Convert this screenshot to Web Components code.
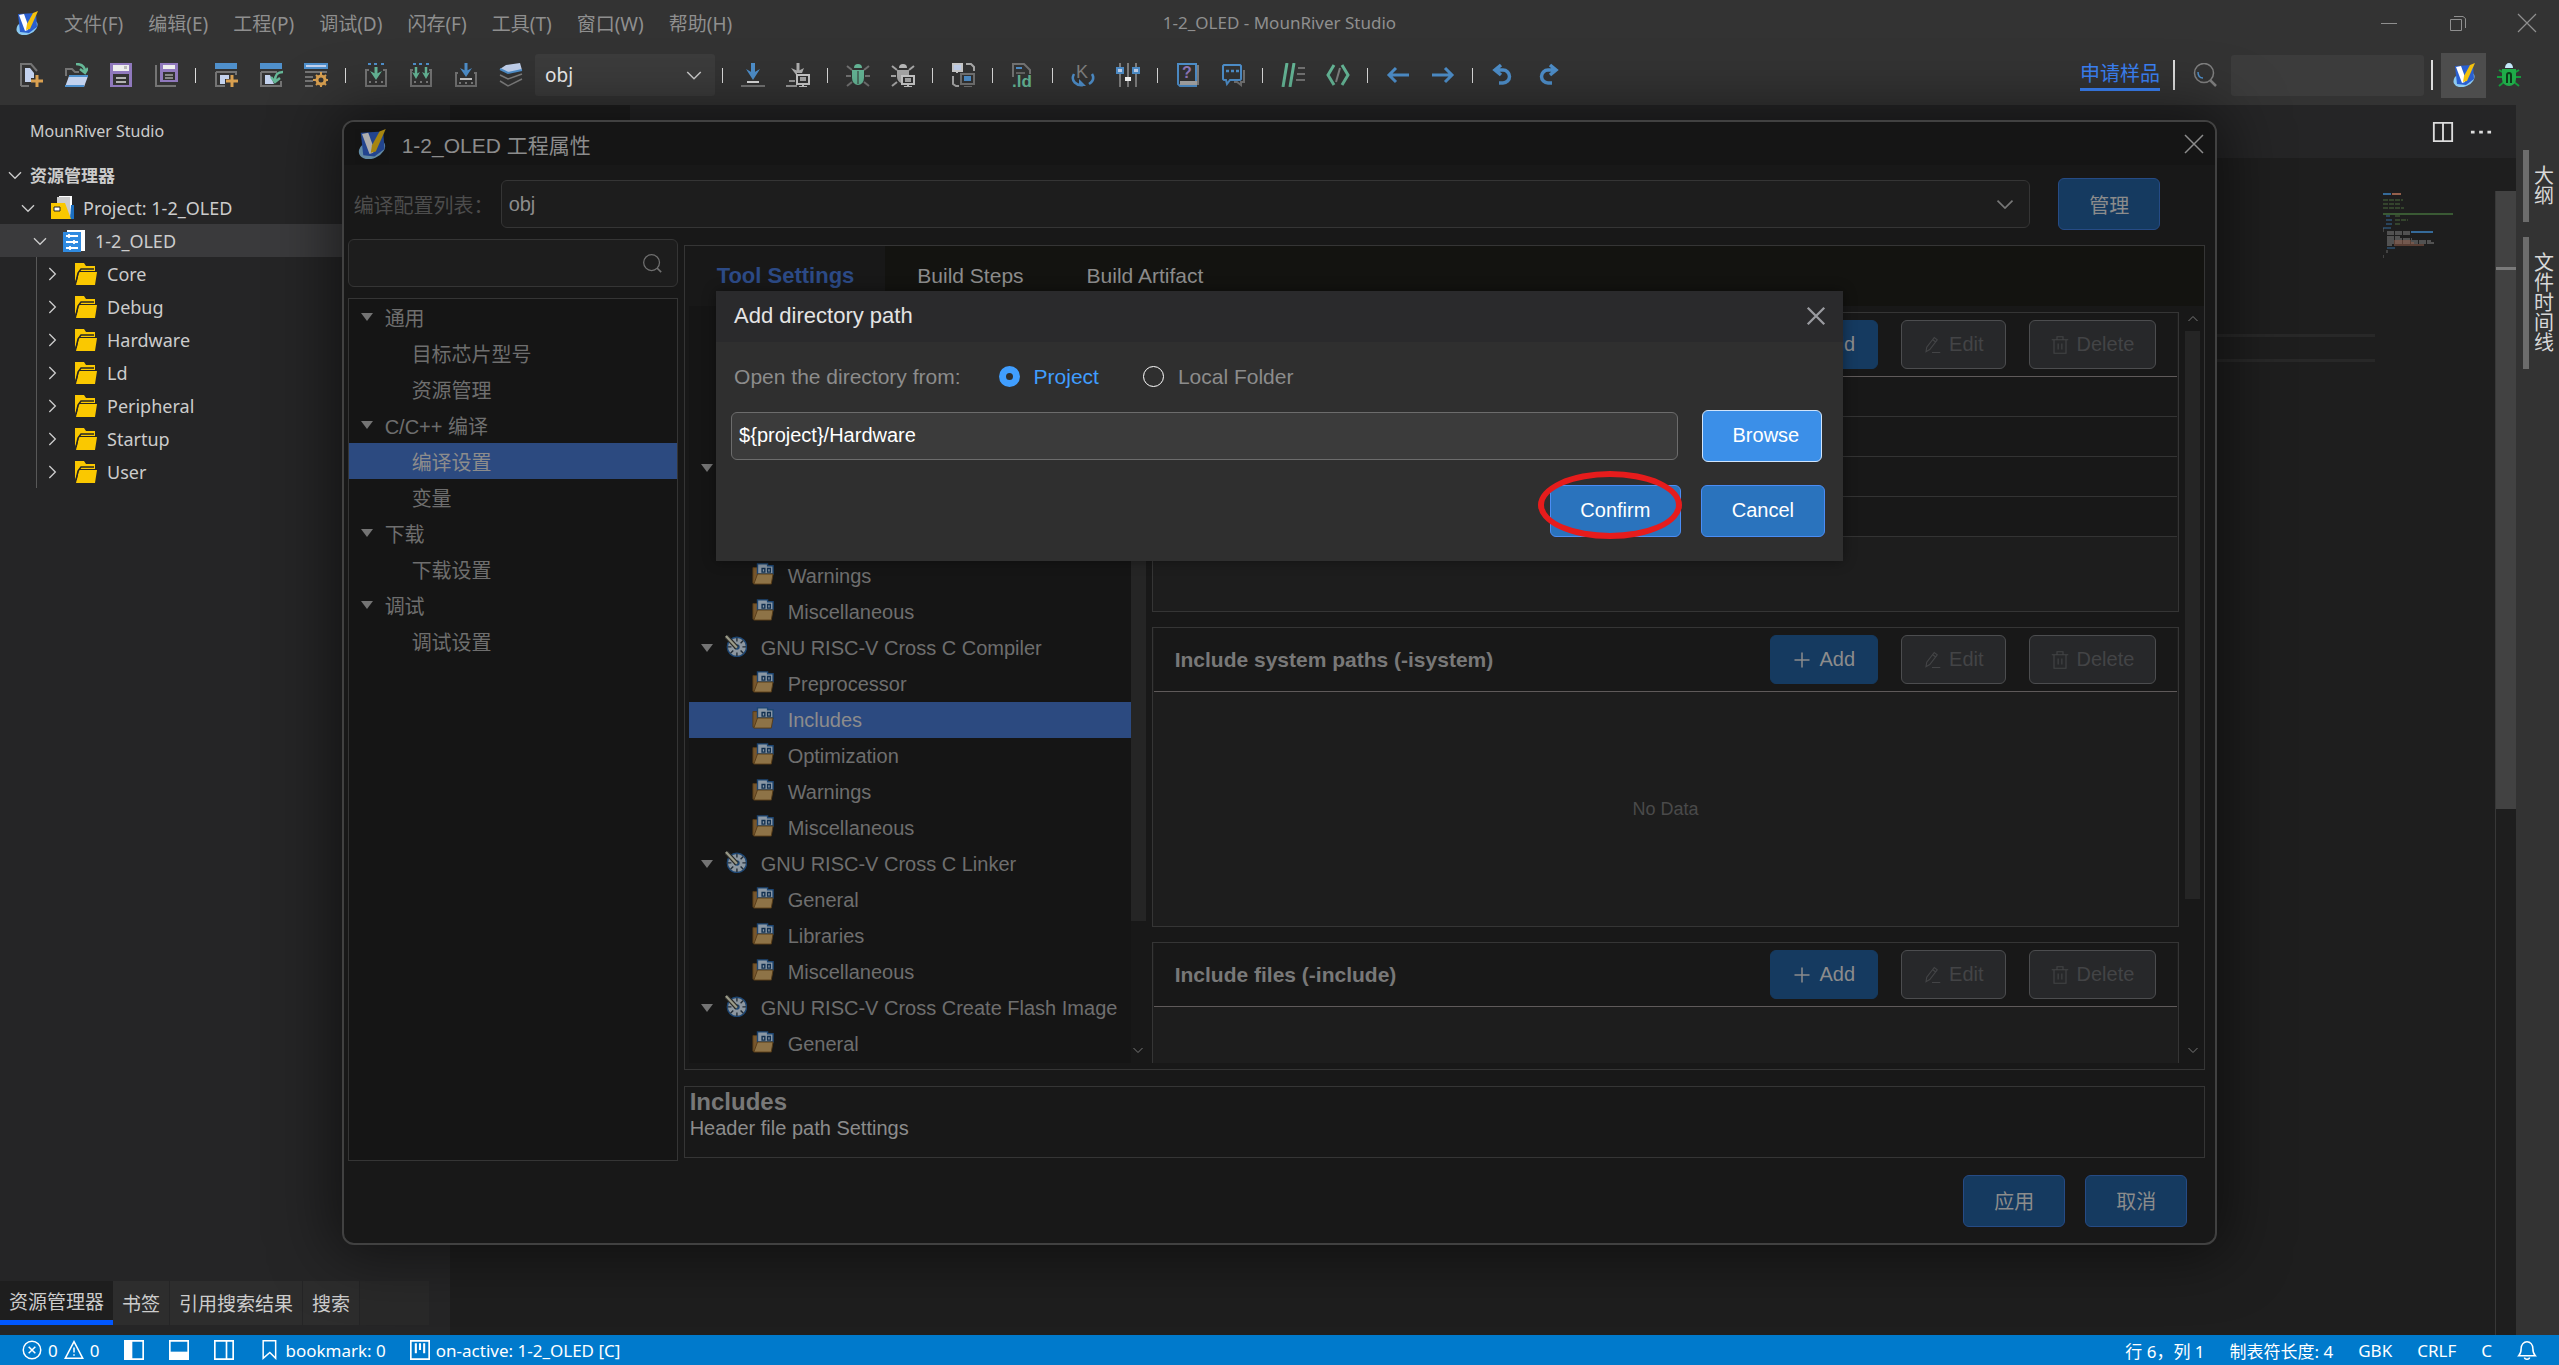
<!DOCTYPE html>
<html lang="zh-CN">
<head>
<meta charset="utf-8">
<title>1-2_OLED - MounRiver Studio</title>
<style>
  html, body { height: 100%; margin: 0; }
  body {
    background: #1e1e1e;
    color: #ccc;
    overflow: hidden;
    font-family: "Noto Sans", "Noto Sans CJK SC", sans-serif;
    font-size: 18px;
  }
</style>
</head>
<body>
<mr-app></mr-app>

<script>
// every icon is drawn in a 24 x 24 box
const ICONS = {
  logo: `<ellipse cx="12" cy="16" rx="11" ry="7.5" fill="#8ccaf0" transform="rotate(-24 12 16)"/>
    <path d="M3 3l18-1 1 14-8 6-9-1z" fill="#2a5fd0"/><path d="M4 4l5-1 4 11 0 5-3 1z" fill="#fff"/>
    <path d="M11 19l1-6 6-11 5-2-8 18z" fill="#f4c20d"/>`,
  newfile: `<path d="M2 23V1h10l6 7M2 23h8" fill="none" stroke="#747474" stroke-width="2"/><path d="M6 5h5l4 5v5h-3v4H6z" fill="#c3d2ee"/>
    <path d="M18 12v12M12 18h12" stroke="#d9a050" stroke-width="3"/>`,
  open: `<path d="M2 13V6h6l3 3h4" fill="none" stroke="#747474" stroke-width="2"/><path d="M5 13h19l-4 11H1z" fill="#c3d2ee"/>
    <path d="M5 13h19M1 23h19" stroke="#4f90cc" stroke-width="2"/><path d="M12 1c5 0 9 2 9 8M16 6l5 4 3-5" fill="none" stroke="#66b898" stroke-width="2.5"/>`,
  save: `<path d="M1 0h22v24H1z" fill="#9079bd"/><path d="M4 2h16v6H4z" fill="#eee"/><path d="M15 3h3v3h-3z" fill="#bbb"/><path d="M4 11h16v11H4z" fill="#333"/><path d="M7 15h10M7 19h10" stroke="#ddd" stroke-width="1.5"/>`,
  saveall: `<path d="M2 2v21h20" fill="none" stroke="#747474" stroke-width="2"/><path d="M6 0h18v19H6z" fill="#9079bd"/><path d="M9 2h12v4H9z" fill="#eee"/><path d="M9 9h12v8H9z" fill="#333"/><path d="M11 12h8M11 15h8" stroke="#ddd"/>`,
  newproj: `<path d="M1 0h22v6H1z" fill="#4f90cc"/><path d="M2 9v14h9M2 9h20v3" fill="none" stroke="#747474" stroke-width="2"/><path d="M6 12h9v4h-4v5H6z" fill="#c3d2ee"/><path d="M18 12v12M12 18h12" stroke="#d9a050" stroke-width="3"/>`,
  importproj: `<path d="M1 0h22v6H1z" fill="#4f90cc"/><path d="M2 9v14h20v-5M2 9h16" fill="none" stroke="#747474" stroke-width="2"/><path d="M6 12h5l4 9H6z" fill="#c3d2ee"/><path d="M24 9c-6 0-8 3-8 9M12 14l4 5 5-4" fill="none" stroke="#66b898" stroke-width="2.5"/>`,
  projset: `<path d="M1 1h22v4H1z" fill="#c3d2ee" stroke="#4f90cc" stroke-width="2"/><path d="M1 9h22M1 14h8M1 18h8M1 23h8" stroke="#747474" stroke-width="2"/><circle cx="17" cy="17" r="4" fill="none" stroke="#d9a050" stroke-width="3"/><path d="M17 9v4M17 21v3M9 17h4M21 17h3M12 12l2 2M22 12l-2 2M12 22l2-2M22 22l-2-2" stroke="#d9a050" stroke-width="2"/>`,
  build: `<path d="M4 1h3M10 1h3M17 1h3" stroke="#4f90cc" stroke-width="2"/><path d="M5 7H2v16h20V7h-3" fill="none" stroke="#747474" stroke-width="2"/><path d="M12 4v9" stroke="#66b898" stroke-width="3"/><path d="M6 8l6 3 6-3-6 9z" fill="#66b898"/><path d="M5 19h2M11 19h2M17 19h2" stroke="#999" stroke-width="1.5"/>`,
  buildall: `<path d="M4 1h3M10 1h3M17 1h3" stroke="#4f90cc" stroke-width="2"/><path d="M4 7H2v16h20V7h-2" fill="none" stroke="#747474" stroke-width="2"/><path d="M7 4v8M17 4v8" stroke="#66b898" stroke-width="2.5"/><path d="M3 9l4 2 4-2-4 7zM13 9l4 2 4-2-4 7z" fill="#66b898"/><path d="M5 19h2M11 19h2M17 19h2" stroke="#999" stroke-width="1.5"/>`,
  load: `<path d="M4 10H2v13h20V10h-2" fill="none" stroke="#747474" stroke-width="2"/><path d="M12 0v9" stroke="#4f90cc" stroke-width="3"/><path d="M6 5l6 3 6-3-6 9z" fill="#4f90cc"/><path d="M6 16h12" stroke="#ccc" stroke-width="2"/><path d="M5 20h2M11 20h2M17 20h2" stroke="#999" stroke-width="1.5"/>`,
  layers: `<path d="M7 2l14-2 2 7-14 3-8-4z" fill="#c3d2ee"/><path d="M1 6l8 4 14-3" fill="none" stroke="#4f90cc" stroke-width="2"/><path d="M1 12l8 4 14-5M1 18l8 5 14-7" fill="none" stroke="#808080" stroke-width="1.5"/>`,
  flash: `<path d="M12 0v10" stroke="#4f90cc" stroke-width="4"/><path d="M5 6l7 4 7-4-7 11z" fill="#4f90cc"/><path d="M6 19h12" stroke="#ddd" stroke-width="2"/><path d="M0 23h24" stroke="#747474" stroke-width="2"/>`,
  flashchip: `<path d="M12 0v8" stroke="#b0b0b0" stroke-width="3"/><path d="M5 5l7 3 6-3-2 5h-5v3z" fill="#b0b0b0"/><path d="M3 18h6M0 23h11" stroke="#999" stroke-width="2"/><path d="M11 12h12v9H11zM17 21v3M13 24h8" fill="none" stroke="#ccc" stroke-width="2"/><path d="M14 14h6v4h-6z" fill="#aaa"/>`,
  bug: `<path d="M1 3l5 4M23 3l-5 4M0 13h5M19 13h5M1 23l5-4M23 23l-5-4" stroke="#747474" stroke-width="2"/><path d="M8 5a4 4 0 018 0z" fill="#66b898"/><path d="M6 7h12v8a6 7 0 01-12 0z" fill="#66b898"/><path d="M12 8v13" stroke="#333"/>`,
  bugchip: `<path d="M1 3l5 4M23 3l-5 4M0 13h5M19 13h3M1 23l5-4" stroke="#aaa" stroke-width="2"/><path d="M8 5a4 4 0 018 0z" fill="#bbb"/><path d="M6 7h12v5h-8v8a7 7 0 01-4-6z" fill="#aaa"/><path d="M11 13h12v8H11zM17 21v3M13 24h8" fill="none" stroke="#ccc" stroke-width="2"/><path d="M14 15h6v4h-6z" fill="#aaa"/>`,
  swap: `<path d="M2 1h9v7H2zM6 8v2" fill="#c3d2ee" stroke="#ccc" stroke-width="2"/><path d="M15 1h5l3 3v4M2 13v8l3 2h3" fill="none" stroke="#aaa" stroke-width="2"/><path d="M10 11h13v10H10zM13 24h8" fill="none" stroke="#747474" stroke-width="2"/><path d="M13 13h7v5h-7z" fill="#4f90cc"/>`,
  ldfile: `<path d="M2 14V1h11l6 6v4" fill="none" stroke="#747474" stroke-width="2"/><path d="M5 5h6" stroke="#4f90cc" stroke-width="2"/><path d="M5 10h9" stroke="#999"/><text x="1" y="24" font-size="17" font-weight="bold" font-family="Liberation Sans" fill="#66b898">.ld</text>`,
  kreset: `<text x="5" y="15" font-size="18" font-family="Liberation Sans" fill="#808080">K</text><path d="M3 11c-4 7 3 12 9 11M21 11c3 5 0 8-3 10" fill="none" stroke="#4f90cc" stroke-width="2.5"/><path d="M8 16l7 7H8z" fill="#4f90cc"/>`,
  sliders: `<path d="M4 0v24M12 0v24M20 0v24" stroke="#808080" stroke-width="2"/><path d="M1 5h6v5H1zM17 5h6v5h-6z" fill="#c3d2ee" stroke="#4f90cc" stroke-width="2"/><path d="M9 14h6v4H9z" fill="#fff"/>`,
  help: `<path d="M2 1h18v22H4l-2-2z" fill="#333" stroke="#4f90cc" stroke-width="2"/><path d="M4 18h17v4H4z" fill="#aaa"/><path d="M22 2v20" stroke="#808080" stroke-width="2"/><text x="6" y="15" font-size="16" font-weight="bold" font-family="Liberation Sans" fill="#9079bd">?</text>`,
  chat: `<path d="M5 17h-2l-1-1V3l1-1h16l1 1v13l-1 1H9l-3 4z" fill="none" stroke="#4f90cc" stroke-width="2"/><path d="M5 8h3M10 8h3M15 8h3" stroke="#4f90cc" stroke-width="2.5"/><path d="M23 7v12h-3v3l-4-3h-3" fill="none" stroke="#747474" stroke-width="2"/>`,
  comment: `<path d="M6 0L2 24M13 0L9 24" stroke="#66b898" stroke-width="3"/><path d="M17 5h7M16 11h8M15 17h9" stroke="#747474" stroke-width="2"/>`,
  code: `<path d="M8 2L2 12l6 10M16 2l6 10-6 10" fill="none" stroke="#66b898" stroke-width="3"/><path d="M14 5l-4 14" stroke="#808080" stroke-width="2"/>`,
  back: `<path d="M23 12H4M10 5l-7 7 7 7" fill="none" stroke="#4f90cc" stroke-width="3"/>`,
  forward: `<path d="M1 12h19M14 5l7 7-7 7" fill="none" stroke="#4f90cc" stroke-width="3"/>`,
  undo: `<path d="M5 7h7a6 6 0 010 13H8M10 2L4 7l6 5" fill="none" stroke="#4f90cc" stroke-width="3.5"/>`,
  redo: `<path d="M19 7h-7a6 6 0 000 13h4M14 2l6 5-6 5" fill="none" stroke="#4f90cc" stroke-width="3.5"/>`,
  lens: `<circle cx="11" cy="10" r="9.5" fill="none" stroke="#808080" stroke-width="1.5"/><path d="M17 17l6 6" stroke="#808080" stroke-width="2.5"/><path d="M5 9c0 4 2 6 5 6" fill="none" stroke="#4f90cc" stroke-width="1.5"/>`,
  greenbug: `<path d="M2 7l5 3M22 7l-5 3M0 14h6M18 14h6M2 23l5-4M22 23l-5-4" stroke="#159a3c" stroke-width="2"/><path d="M8 5a4 5 0 018 0z" fill="#c4e7fa"/><path d="M5 6h14v10a7 7 0 01-14 0z" fill="#1fab49"/><path d="M10 20v-8a2 2 0 014 0v8" fill="none" stroke="#0b3b19" stroke-width="2"/>`,
  min: `<path d="M4 12.5h16" stroke="currentColor"/>`,
  restore: `<path d="M4.500 8.500h11v11h-11zM8 5.500h9l2.500 2V17" fill="none" stroke="currentColor"/>`,
  close: `<path d="M3 3l18 18M21 3L3 21" stroke="currentColor" stroke-width="var(--stroke, 1.5)"/>`,
  chevron: `<path d="M3 8l9 9 9-9" fill="none" stroke="currentColor" stroke-width="2"/>`,
  caret: `<path d="M0 4h24L12 20z" fill="currentColor"/>`,
  search: `<circle cx="11.500" cy="11.500" r="9.500" fill="none" stroke="currentColor" stroke-width="1.500"/><path d="M18 18l5 5" stroke="currentColor" stroke-width="2"/>`,
  plus: `<path d="M12 2v20M2 12h20" stroke="currentColor" stroke-width="2"/>`,
  pencil: `<path d="M4 21l1-6L15 2l4 3L9 18zM13 5l4 3M12 22h11" fill="none" stroke="currentColor" stroke-width="1.500"/>`,
  trash: `<path d="M1 5h22M8 5V1h8v4M4 5v18h16V5M9.500 10v8M14.500 10v8" fill="none" stroke="currentColor" stroke-width="1.500"/>`,
  folder: `<path d="M1 1h9l2 3h9v5H5L1 20z" fill="#fac800"/><path d="M5 10h18l-2 13H2z" fill="#fac800"/><path d="M20 7H7l-3 4-2 9" fill="none" stroke="#252526" stroke-width="1.500"/>`,
  projectbox: `<path d="M7 1h14v20H7z" fill="#ccc"/><path d="M9 0h12v18" fill="none" stroke="#fff" stroke-width="2"/><path d="M21 9h3v14h-4z" fill="#1b6fc0"/><path d="M1 7h14l6 16H1z" fill="#fac800"/><path d="M4 11h6v4H4z" fill="#fff" stroke="#252526"/>`,
  project: `<path d="M5 1h18v21H5z" fill="#fff"/><path d="M1 3h18v20H1z" fill="#2f8ae0"/><path d="M4 7h12M4 13h12M4 19h12M7 5v4M12 11v4M8 17v4" stroke="#fff" stroke-width="1.800"/>`,
  option: `<path d="M1 5h6v17H1z" fill="#77562c" stroke="#573b17"/><path d="M6 1h11v2h6v9H6z" fill="#8b98a5" stroke="#1d4673" stroke-width="1.500"/><path d="M11 6h3v4h-3zM17 6h3v4h-3z" fill="#8b98a5" stroke="#123050" stroke-width="1.500"/><path d="M6 12h17l-2 11H2z" fill="#8e7347" stroke="#573b17"/>`,
  tool: `<circle cx="13" cy="13" r="10.500" fill="#8d97a0" stroke="#1d4673" stroke-width="1.500"/><path d="M13 3v4M13 19v4M3 13h4M19 13h4M6 20l3-3M20 20l-3-3M20 6l-3 3" stroke="#222c36" stroke-width="1.500"/><circle cx="13" cy="13" r="3" fill="#1d4673"/><path d="M1 1l12 13" stroke="#2a2a28" stroke-width="5"/><path d="M1 1l12 13" stroke="#9a9a88" stroke-width="2.500"/>`,
  split: `<path d="M2 2h20v20H2zM12 2v20" fill="none" stroke="#ddd" stroke-width="2"/>`,
  dots: `<path d="M1 12h4M10 12h4M19 12h4" stroke="#ddd" stroke-width="3"/>`,
  error: `<circle cx="12" cy="12" r="10.500" fill="none" stroke="#fff" stroke-width="1.800"/><path d="M8 8l8 8M16 8l-8 8" stroke="#fff" stroke-width="1.800"/>`,
  warning: `<path d="M12 2l10.500 20h-21zM12 9v6M12 17v2" fill="none" stroke="#fff" stroke-width="1.800"/>`,
  paneleft: `<path d="M1 1h22v22H1z" fill="none" stroke="#fff" stroke-width="2"/><path d="M1 1h9v22H1z" fill="#fff"/>`,
  panebottom: `<path d="M1 1h22v22H1z" fill="none" stroke="#fff" stroke-width="2"/><path d="M1 14h22v9H1z" fill="#fff"/>`,
  paneright: `<path d="M1 1h22v22H1zM15 1v22" fill="none" stroke="#fff" stroke-width="2"/>`,
  bookmark: `<path d="M5 1h15v21l-7-7-8 7z" fill="none" stroke="#fff" stroke-width="1.800"/>`,
  board: `<path d="M1 1h22v22H1z" fill="none" stroke="#fff" stroke-width="2"/><path d="M7 4v12M12 4v8M17 4v12" stroke="#fff" stroke-width="2.500"/>`,
  bell: `<path d="M2 19c3-3 3-5 3-9a7 8 0 0114 0c0 4 0 6 3 9zM9 21a3 2 0 006 0" fill="none" stroke="#fff" stroke-width="1.800"/>`,
};

function define(name, html, setup) {
  const template = document.createElement("template");
  template.innerHTML = html;
  customElements.define(name, class extends HTMLElement {
    constructor() {
      super();
      this.attachShadow({ mode: "open" });
      this.shadowRoot.appendChild(template.content.cloneNode(true));
    }
    connectedCallback() {
      if (setup) setup(this, this.shadowRoot);
    }
  });
}

// <mr-icon name="save">, sized with --size
define("mr-icon", `
<style>
  :host { display: inline-flex; flex: none; width: var(--size, 24px); height: var(--size, 24px); }
  svg { width: 100%; height: 100%; }
</style>
<svg viewBox="0 0 24 24" aria-hidden="true"></svg>
`, (el, root) => {
  root.querySelector("svg").innerHTML = ICONS[el.getAttribute("name")] || "";
});

define("mr-button", `
<style>
  :host { display: inline-flex; min-width: 102px; height: 52px; }
  button {
    flex: 1; display: flex; align-items: center; justify-content: center; gap: 8px;
    margin: 0; padding: 0 20px; border: 1px solid #264b85; border-radius: 6px;
    background: #153a60; color: #8c8c8c; font: inherit; --size: 18px;
  }
  :host([kind=primary]) button { background: #2a73bd; border-color: #4b8df5; color: #fff; }
  :host([kind=active]) button { background: #3b8fe8; border-color: #d0e4fb; color: #fff; padding-left: 28px; }
  :host([kind=tool]), :host([kind=off]) { min-width: 0; height: 49px; }
  :host([kind=tool]) button { border-color: #153a60; padding: 0 22px; }
  :host([kind=off]) button { background: #27282a; border-color: #4c4d4f; color: #434446; padding: 0 21px; }
</style>
<button type="button"><slot></slot></button>
`, (el, root) => {
  root.querySelector("button").disabled = el.getAttribute("kind") === "off";
});

define("mr-titlebar", `
<style>
  :host { display: grid; grid-template-columns: 1fr auto 1fr; align-items: center; height: 45px; background: #333; color: #8f8f8f; }
  nav { display: flex; align-items: center; padding-left: 15px; font-size: 19px; }
  nav button { margin: 0 0 0 25px; }
  .title { font-size: 17px; }
  button { border: 0; padding: 0; background: none; color: inherit; font: inherit; white-space: nowrap; }
  .window { display: flex; justify-content: flex-end; padding-right: 20px; gap: 45px; --stroke: 1.200; }
  .window button { display: flex; }
</style>
<nav><mr-icon name="logo"></mr-icon></nav>
<span class="title">1-2_OLED - MounRiver Studio</span>
<div class="window">
  <button aria-label="minimize"><mr-icon name="min"></mr-icon></button>
  <button aria-label="restore"><mr-icon name="restore"></mr-icon></button>
  <button aria-label="close"><mr-icon name="close"></mr-icon></button>
</div>
`, (el, root) => {
  const nav = root.querySelector("nav");
  for (const label of ["文件(F)", "编辑(E)", "工程(P)", "调试(D)", "闪存(F)", "工具(T)", "窗口(W)", "帮助(H)"]) {
    const button = document.createElement("button");
    button.textContent = label;
    nav.appendChild(button);
  }
});

// a row of icon buttons, "|" makes a separator
define("mr-toolgroup", `
<style>
  :host { display: flex; align-items: center; }
  button { display: flex; justify-content: center; width: 45px; padding: 0; border: 0; background: none; }
  i { width: 1px; height: 15px; margin: 0 7px; background: #ddd; }
</style>
`, (el, root) => {
  for (const name of el.getAttribute("icons").split(" ")) {
    const item = document.createElement(name === "|" ? "i" : "button");
    if (name !== "|") {
      item.setAttribute("aria-label", name);
      item.innerHTML = `<mr-icon name="${name}"></mr-icon>`;
    }
    root.appendChild(item);
  }
});

define("mr-toolbar", `
<style>
  :host { display: flex; align-items: center; height: 60px; padding-left: 8px; background: #333; }
  .select { display: grid; align-items: center; width: 180px; margin-left: 2px; }
  .select > * { grid-area: 1 / 1; }
  .select mr-icon { --size: 18px; justify-self: end; margin-right: 12px; pointer-events: none; }
  select { appearance: none; height: 42px; width: 100%; border: 0; border-radius: 3px; padding: 0 10px; background: #3c3c3c; color: #f0f0f0; font: inherit; font-size: 19px; line-height: 28px; }
  .right { display: flex; align-items: center; margin-left: auto; }
  a { color: #3b82f6; text-decoration: none; font-size: 20px; line-height: 28px; border-bottom: 3px solid #3b82f6; }
  .bar { width: 2px; height: 30px; background: #ddd; }
  input { width: 193px; height: 41px; box-sizing: border-box; border: 0; border-radius: 3px; background: #3c3c3c; }
  button { display: flex; align-items: center; justify-content: center; width: 45px; height: 45px; border: 0; padding: 0; background: none; }
  button.on { background: #4d4d4d; }
</style>
<mr-toolgroup icons="newfile open save saveall | newproj importproj projset | build buildall load layers"></mr-toolgroup>
<label class="select"><select aria-label="configuration"><option>obj</option></select><mr-icon name="chevron"></mr-icon></label>
<mr-toolgroup icons="| flash flashchip | bug bugchip | swap | ldfile | kreset sliders | help chat | comment code | back forward | undo redo"></mr-toolgroup>
<div class="right">
  <a href="#">申请样品</a>
  <span class="bar" style="margin: 0 18px 0 13px"></span>
  <mr-icon name="lens"></mr-icon>
  <input type="text" aria-label="search" style="margin: 0 7px 0 14px">
  <span class="bar" style="margin-right: 8px"></span>
  <button class="on" aria-label="edit view"><mr-icon name="logo"></mr-icon></button>
  <button aria-label="debug view" style="margin-right: 28px"><mr-icon name="greenbug"></mr-icon></button>
</div>
`);

define("mr-file-item", `
<style>
  :host { display: flex; align-items: center; height: 33px; padding-left: calc(8px + var(--level) * 12px); color: #ccc; white-space: nowrap; }
  :host([selected]) { background: #3a3a3c; }
  .chevron { --size: 16px; margin-right: 14px; }
  :host([closed]) .chevron { transform: rotate(-90deg); }
  .kind { display: flex; margin-right: 9px; }
</style>
<mr-icon class="chevron" name="chevron"></mr-icon><span class="kind"></span><slot></slot>
`, (el, root) => {
  el.style.setProperty("--level", el.getAttribute("level"));
  root.querySelector(".kind").innerHTML = `<mr-icon name="${el.getAttribute("icon")}"></mr-icon>`;
});

define("mr-explorer", `
<style>
  :host { display: flex; flex-direction: column; width: 450px; flex: none; background: #252526; }
  .title { line-height: 53px; padding-left: 30px; font-size: 16px; }
  h2 { display: flex; align-items: center; height: 33px; margin: 0; padding-left: 7px; gap: 7px; font-size: 17px; --size: 16px; }
  .children { position: relative; }
  .children::before { content: ""; position: absolute; left: 36px; top: 0; bottom: 0; width: 1px; background: #585858; }
  .tabs { display: flex; width: 429px; margin: auto 0 10px; background: #292929; }
  .tabs button { height: 44px; padding: 0 9px; border: 0; border-right: 1px solid #252526; background: #2d2d2d; color: #ccc; font: inherit; font-size: 19px; }
  .tabs .on { background: #1e1e1e; border-bottom: 5px solid #0057ff; border-right: 0; }
</style>
<div class="title">MounRiver Studio</div>
<h2><mr-icon name="chevron"></mr-icon>资源管理器</h2>
<mr-file-item level="1" icon="projectbox">Project: 1-2_OLED</mr-file-item>
<mr-file-item level="2" icon="project" selected>1-2_OLED</mr-file-item>
<div class="children">
  <mr-file-item level="3" icon="folder" closed>Core</mr-file-item>
  <mr-file-item level="3" icon="folder" closed>Debug</mr-file-item>
  <mr-file-item level="3" icon="folder" closed>Hardware</mr-file-item>
  <mr-file-item level="3" icon="folder" closed>Ld</mr-file-item>
  <mr-file-item level="3" icon="folder" closed>Peripheral</mr-file-item>
  <mr-file-item level="3" icon="folder" closed>Startup</mr-file-item>
  <mr-file-item level="3" icon="folder" closed>User</mr-file-item>
</div>
<div class="tabs">
  <button class="on">资源管理器</button><button>书签</button><button>引用搜索结果</button><button>搜索</button>
</div>
`);

define("mr-editor", `
<style>
  :host { display: flex; flex-direction: column; flex: 1; min-width: 0; background: #1e1e1e; }
  .tabs { display: flex; align-items: center; height: 53px; background: #252526; }
  .tab { width: 180px; height: 100%; background: #1e1e1e; }
  .actions { display: flex; gap: 16px; margin-left: auto; padding-right: 24px; --size: 22px; }
  .code { flex: 1; display: flex; justify-content: flex-end; padding-top: 33px; }
  .line { flex: 1; height: 22px; margin-top: 143px; border: solid #282828; border-width: 3px 0; }
  .map { width: 112px; height: 70px; margin: 0 0 0 8px; }
  .scroll { width: 20px; border-left: 1px solid #383838; }
  .thumb { height: 54%; background: linear-gradient(#424242 76px, #7a7a7a 76px, #7a7a7a 79px, #424242 79px); }
</style>
<div class="tabs"><div class="tab"></div><div class="actions"><mr-icon name="split"></mr-icon><mr-icon name="dots"></mr-icon></div></div>
<div class="code">
  <div class="line"></div>
  <svg class="map" viewBox="0 0 112 70">
    <path d="M0 3h8" stroke="#356a99" stroke-width="2"/><path d="M9 3h9" stroke="#95604c" stroke-width="2"/>
    <path d="M0 9h20M0 13h18M0 17h21M12 25h5M12 29h13M12 33h5" stroke="#4a6b3c" stroke-width="1" stroke-dasharray="5 1"/>
    <path d="M0 23h70" stroke="#3a5a34" stroke-width="2"/>
    <path d="M3 25h4M3 29h6M3 33h6M0 37h8M4 57h8" stroke="#356a99" stroke-width="1"/>
    <path d="M4 41h24M4 43h23M4 46h13M4 48h25M4 50h44M4 52h48M4 54h5" stroke="#858585" stroke-width="1" stroke-dasharray="7 1"/>
    <path d="M28 41h22" stroke="#356a99" stroke-width="2"/><path d="M11 50h17M11 52h20M11 54h30" stroke="#95604c" stroke-width="1"/>
    <path d="M0 37v4M4 59v3M0 64v3" stroke="#666"/>
  </svg>
  <div class="scroll"><div class="thumb"></div></div>
</div>
`);

define("mr-rail", `
<style>
  :host { display: flex; flex-direction: column; gap: 15px; width: 36px; flex: none; padding: 45px 0 0 7px; background: #333; }
  button { display: flex; align-items: center; width: 36px; padding: 16px 0; border: 0; border-left: 6px solid #6c6c6c; background: none; color: #d8d8d8; font: inherit; font-size: 20px; line-height: 20px; }
  span { width: 20px; margin-left: 5px; word-break: break-all; }
</style>
<button><span>大纲</span></button>
<button><span>文件时间线</span></button>
`);

define("mr-statusbar", `
<style>
  :host { display: flex; align-items: center; height: 30px; padding: 0 22px; background: #007acc; color: #fff; font-size: 17px; white-space: nowrap; --size: 20px; }
  span { display: flex; align-items: center; gap: 6px; }
  .right { margin-left: auto; gap: 25px; }
</style>
<span style="margin-right: 25px"><mr-icon name="error"></mr-icon>0<mr-icon name="warning"></mr-icon>0</span>
<span style="gap: 25px; margin-right: 25px"><mr-icon name="paneleft"></mr-icon><mr-icon name="panebottom"></mr-icon><mr-icon name="paneright"></mr-icon></span>
<span style="margin-right: 24px"><mr-icon name="bookmark"></mr-icon>bookmark: 0</span>
<span><mr-icon name="board"></mr-icon>on-active: 1-2_OLED [C]</span>
<span class="right"><span>行 6，列 1</span><span>制表符长度: 4</span><span>GBK</span><span>CRLF</span><span>C</span><mr-icon name="bell"></mr-icon></span>
`);

// group rows carry a caret, leaf rows are indented
define("mr-nav-item", `
<style>
  :host { display: flex; align-items: center; height: 36px; padding-left: 63px; color: #6e6e6e; white-space: nowrap; }
  :host([group]) { padding-left: 12px; }
  :host([selected]) { background: #2c4a80; color: #8c8c8c; }
  .caret { display: none; --size: 12px; margin-right: 12px; color: #747474; }
  :host([group]) .caret { display: inline-flex; }
  .kind { display: flex; --size: 22px; margin: 0 14px 4px 0; }
  .kind:empty { display: none; }
</style>
<mr-icon class="caret" name="caret"></mr-icon><span class="kind"></span><slot></slot>
`, (el, root) => {
  const icon = el.getAttribute("icon");
  if (icon) root.querySelector(".kind").innerHTML = `<mr-icon name="${icon}"></mr-icon>`;
});

define("mr-scrollbar", `
<style>
  :host { display: flex; flex-direction: column; align-items: center; width: 15px; flex: none; color: #777; --size: 12px; }
  .up { transform: rotate(180deg); margin: 7px 0 6px; }
  .thumb { width: 15px; height: var(--thumb); background: #252525; }
  .down { margin: auto 0 7px; }
</style>
<mr-icon class="up" name="chevron"></mr-icon><div class="thumb"></div><mr-icon class="down" name="chevron"></mr-icon>
`);

define("mr-path-section", `
<style>
  :host { display: flex; flex-direction: column; flex: none; height: 300px; box-sizing: border-box; padding: 0 1px; border: 1px solid #353535; background: #1d1d1d; }
  header { display: flex; align-items: center; gap: 23px; height: 63px; padding: 0 21px; background: #181818; border-bottom: 1px solid #5f5a5a; }
  h3 { flex: 1; margin: 0; font-size: 21px; color: #787878; }
  .body { flex: 1; display: flex; flex-direction: column; align-items: center; justify-content: center; font-size: 18px; color: #4a4a4a; }
  :host([rows]) .body { justify-content: flex-start; }
  .row { align-self: stretch; height: 39px; background: #181818; border-bottom: 1px solid #333; }
</style>
<header>
  <h3><slot name="title"></slot></h3>
  <mr-button kind="tool"><mr-icon name="plus"></mr-icon>Add</mr-button>
  <mr-button kind="off"><mr-icon name="pencil"></mr-icon>Edit</mr-button>
  <mr-button kind="off"><mr-icon name="trash"></mr-icon>Delete</mr-button>
</header>
<div class="body"><slot></slot></div>
`, (el, root) => {
  const rows = Number(el.getAttribute("rows") || 0);
  for (let i = 0; i < rows; i++) {
    root.querySelector(".body").insertAdjacentHTML("beforeend", `<div class="row"></div>`);
  }
});

define("mr-path-dialog", `
<style>
  :host { display: block; width: 60.200%; min-width: 860px; height: fit-content; background: #2f2f2f; box-shadow: 0 0 12px rgba(0, 0, 0, .4); }
  header { display: flex; align-items: center; justify-content: space-between; height: 51px; padding: 0 16px 0 18px; background: #2a2a2c; color: #e4e4e4; font-size: 22px; }
  header button { display: flex; border: 0; padding: 0; background: none; color: #9a9ba0; --size: 22px; --stroke: 2.500; }
  .from { display: flex; align-items: center; height: 70px; padding-left: 18px; font-size: 21px; color: #8c8c8c; }
  .from label { display: flex; align-items: center; gap: 14px; margin-left: 44px; }
  .from span + label { margin-left: 38px; }
  .from label.on { color: #409eff; }
  input[type=radio] { appearance: none; box-sizing: border-box; width: 21px; height: 21px; margin: 0; border: 1px solid #fff; border-radius: 50%; }
  input[type=radio]:checked { border: 7px solid #409eff; }
  .path { display: flex; align-items: center; gap: 24px; padding: 0 21px 0 15px; font-size: 20px; height: 48px; }
  .path input { flex: 1; height: 48px; box-sizing: border-box; margin: 0; padding: 0 7px; border: 1px solid #6c6c6c; border-radius: 6px; background: #3b3b3b; color: #fff; font: inherit; }
  .path mr-button { width: 120px; }
  footer { display: flex; justify-content: flex-end; gap: 20px; padding: 25px 18px 24px; font-size: 20px; }
  .confirm { position: relative; width: 131px; height: 52px; display: flex; }
  .confirm mr-button { flex: 1; }
  .ring { position: absolute; left: -12px; top: -14px; width: 144px; height: 68px; box-sizing: border-box; border: 6px solid #e61c1c; border-radius: 50%; pointer-events: none; }
  .cancel { width: 124px; }
</style>
<header>Add directory path<button aria-label="close"><mr-icon name="close"></mr-icon></button></header>
<div class="from">
  <span>Open the directory from:</span>
  <label class="on"><input type="radio" name="from" checked>Project</label>
  <label><input type="radio" name="from">Local Folder</label>
</div>
<div class="path"><input type="text" aria-label="directory path" value="\${project}/Hardware"><mr-button kind="active">Browse</mr-button></div>
<footer>
  <div class="confirm"><mr-button kind="primary">Confirm</mr-button><div class="ring"></div></div>
  <mr-button class="cancel" kind="primary">Cancel</mr-button>
</footer>
`);

define("mr-properties", `
<style>
  :host {
    position: relative; display: flex; flex-direction: column; box-sizing: border-box;
    width: 73.300%; height: 82.400%; border: 2px solid #414141; border-radius: 12px; overflow: hidden;
    background: #181818; box-shadow: 0 0 60px 10px rgba(0, 0, 0, .5);
    font-family: "Liberation Sans", "Noto Sans CJK SC", sans-serif; font-size: 20px;
  }
  .head { display: flex; align-items: center; gap: 15px; height: 43px; padding: 0 9px 0 13px; background: #151515; color: #8c8c8c; font-size: 21px; }
  .head mr-icon { opacity: .65; --size: 30px; }
  .head button { display: flex; margin-left: auto; padding: 0; border: 0; background: none; color: #ccc; }
  .head button mr-icon { --size: 24px; }
  .config { display: flex; align-items: center; margin: 13px 55px 9px 10px; color: #4c4c4c; }
  .config label { width: 147px; white-space: nowrap; }
  .select { display: grid; align-items: center; flex: 1; margin-right: 28px; }
  .select > * { grid-area: 1 / 1; }
  .select mr-icon { justify-self: end; margin-right: 15px; --size: 20px; color: #777; pointer-events: none; }
  select { appearance: none; width: 100%; height: 48px; padding: 0 7px; border: 1px solid #353535; border-radius: 6px; background: #1d1d1d; color: #8c8c8c; font: inherit; }
  main { flex: 1; min-height: 0; display: flex; gap: 6px; padding: 0 10px 0 4px; }
  .left { width: 330px; flex: none; display: flex; flex-direction: column; gap: 11px; }
  .search { display: grid; align-items: center; --size: 20px; color: #707070; }
  .search > * { grid-area: 1 / 1; }
  .search mr-icon { justify-self: end; margin-right: 16px; }
  .search input { width: 100%; height: 48px; box-sizing: border-box; border: 1px solid #353535; border-radius: 6px; background: #1d1d1d; }
  .list { flex: 1; border: 1px solid #353535; background: #151515; }
  .right { flex: 1; min-width: 0; display: flex; flex-direction: column; gap: 16px; padding: 6px 0 3px; }
  .panel { flex: 1; min-height: 0; display: flex; flex-direction: column; border: 1px solid #353535; }
  .tabs { display: flex; height: 60px; background: #131310; }
  .tabs button { padding: 0 31px 0 32px; border: 0; background: none; color: #8c8c8c; font: inherit; font-size: 21px; }
  .tabs .on { background: #181818; color: #2c4a86; font-weight: bold; font-size: 22px; }
  .content { flex: 1; min-height: 0; display: flex; padding: 0 4px 6px; }
  .tree { width: 442px; flex: none; overflow: hidden; background: #151515; }
  .sections { flex: 1; min-width: 0; display: flex; flex-direction: column; gap: 15px; margin: 0 6px; padding-top: 6px; overflow: hidden; }
  .about { height: 70px; flex: none; border: 1px solid #353535; padding: 0 5px; color: #8c8c8c; }
  .about h3 { margin: 0; font-size: 24px; line-height: 29px; color: #787878; }
  .about p { margin: 0; line-height: 24px; font-size: 20px; }
  .foot { display: flex; justify-content: flex-end; gap: 20px; padding: 14px 28px 16px; }
  .cover { position: absolute; inset: 0; display: flex; justify-content: center; padding-top: 9%; }
</style>
<div class="head"><mr-icon name="logo"></mr-icon>1-2_OLED 工程属性<button aria-label="close"><mr-icon name="close"></mr-icon></button></div>
<div class="config">
  <label for="config">编译配置列表：</label>
  <div class="select"><select id="config"><option>obj</option></select><mr-icon name="chevron"></mr-icon></div>
  <mr-button>管理</mr-button>
</div>
<main>
  <div class="left">
    <div class="search"><input type="text" aria-label="filter"><mr-icon name="search"></mr-icon></div>
    <div class="list">
      <mr-nav-item group>通用</mr-nav-item>
      <mr-nav-item>目标芯片型号</mr-nav-item>
      <mr-nav-item>资源管理</mr-nav-item>
      <mr-nav-item group>C/C++ 编译</mr-nav-item>
      <mr-nav-item selected>编译设置</mr-nav-item>
      <mr-nav-item>变量</mr-nav-item>
      <mr-nav-item group>下载</mr-nav-item>
      <mr-nav-item>下载设置</mr-nav-item>
      <mr-nav-item group>调试</mr-nav-item>
      <mr-nav-item>调试设置</mr-nav-item>
    </div>
  </div>
  <div class="right">
    <div class="panel">
      <div class="tabs"><button class="on">Tool Settings</button><button>Build Steps</button><button>Build Artifact</button></div>
      <div class="content">
        <div class="tree">
          <mr-nav-item></mr-nav-item>
          <mr-nav-item></mr-nav-item>
          <mr-nav-item></mr-nav-item>
          <mr-nav-item></mr-nav-item>
          <mr-nav-item group icon="tool"></mr-nav-item>
          <mr-nav-item icon="option"></mr-nav-item>
          <mr-nav-item icon="option"></mr-nav-item>
          <mr-nav-item icon="option">Warnings</mr-nav-item>
          <mr-nav-item icon="option">Miscellaneous</mr-nav-item>
          <mr-nav-item group icon="tool">GNU RISC-V Cross C Compiler</mr-nav-item>
          <mr-nav-item icon="option">Preprocessor</mr-nav-item>
          <mr-nav-item icon="option" selected>Includes</mr-nav-item>
          <mr-nav-item icon="option">Optimization</mr-nav-item>
          <mr-nav-item icon="option">Warnings</mr-nav-item>
          <mr-nav-item icon="option">Miscellaneous</mr-nav-item>
          <mr-nav-item group icon="tool">GNU RISC-V Cross C Linker</mr-nav-item>
          <mr-nav-item icon="option">General</mr-nav-item>
          <mr-nav-item icon="option">Libraries</mr-nav-item>
          <mr-nav-item icon="option">Miscellaneous</mr-nav-item>
          <mr-nav-item group icon="tool">GNU RISC-V Cross Create Flash Image</mr-nav-item>
          <mr-nav-item icon="option">General</mr-nav-item>
        </div>
        <mr-scrollbar style="--thumb: 78%"></mr-scrollbar>
        <div class="sections">
          <mr-path-section rows="4"></mr-path-section>
          <mr-path-section><span slot="title">Include system paths (-isystem)</span>No Data</mr-path-section>
          <mr-path-section><span slot="title">Include files (-include)</span></mr-path-section>
        </div>
        <mr-scrollbar style="--thumb: 75%"></mr-scrollbar>
      </div>
    </div>
    <div class="about"><h3>Includes</h3><p>Header file path Settings</p></div>
  </div>
</main>
<div class="foot"><mr-button>应用</mr-button><mr-button>取消</mr-button></div>
<div class="cover"><mr-path-dialog></mr-path-dialog></div>
`);

define("mr-app", `
<style>
  :host { display: flex; flex-direction: column; height: 100vh; position: relative; overflow: hidden; }
  .work { flex: 1; min-height: 0; display: flex; }
  .overlay { position: absolute; inset: 0; display: grid; place-items: center; }
</style>
<mr-titlebar></mr-titlebar>
<mr-toolbar></mr-toolbar>
<div class="work"><mr-explorer></mr-explorer><mr-editor></mr-editor><mr-rail></mr-rail></div>
<mr-statusbar></mr-statusbar>
<div class="overlay"><mr-properties></mr-properties></div>
`);
</script>
</body>
</html>
